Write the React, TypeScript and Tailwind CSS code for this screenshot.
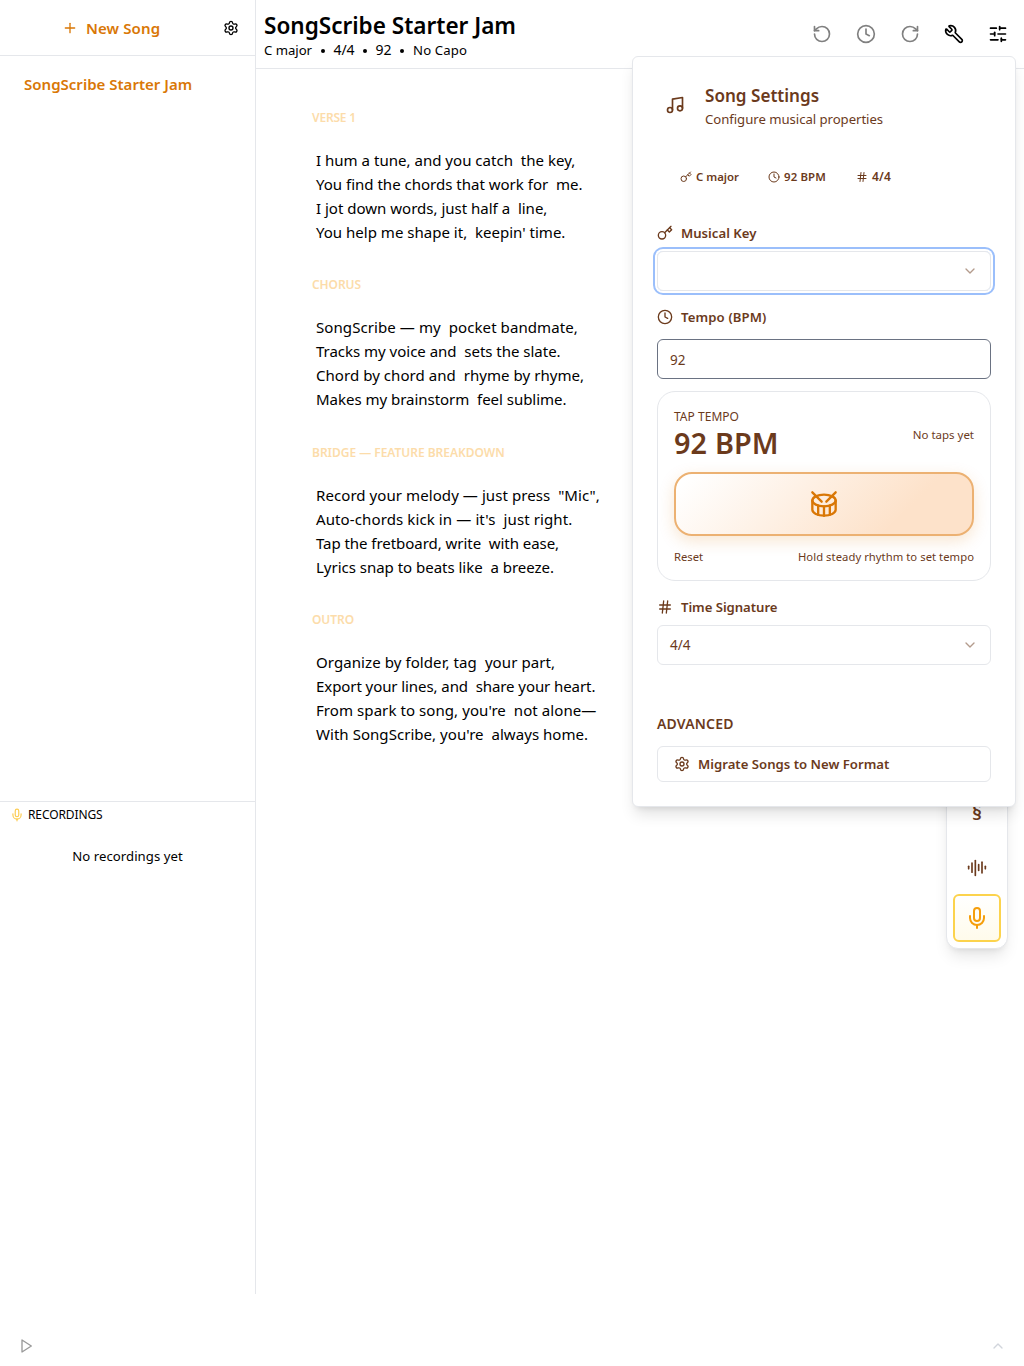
import React from "react";
import {
  AudioLines,
  ChevronDown,
  ChevronUp,
  Clock,
  Hash,
  Mic,
  Music,
  Plus,
  RotateCcw,
  RotateCw,
  Settings,
  SlidersHorizontal,
  Wrench,
} from "lucide-react";

type Line = [text: string, tracking: string];

const sections: { label: string; tracking: string; lines: Line[] }[] = [
  {
    label: "VERSE 1",
    tracking: "tracking-[-0.18px]",
    lines: [
      ["I hum a tune, and you catch  the key,", "tracking-[0.01px]"],
      ["You find the chords that work for  me.", "tracking-[-0.01px]"],
      ["I jot down words, just half a  line,", "tracking-[-0.01px]"],
      ["You help me shape it,  keepin' time.", "tracking-[0px]"],
    ],
  },
  {
    label: "CHORUS",
    tracking: "tracking-[-0.08px]",
    lines: [
      ["SongScribe — my  pocket bandmate,", "tracking-[0.07px]"],
      ["Tracks my voice and  sets the slate.", "tracking-[-0.03px]"],
      ["Chord by chord and  rhyme by rhyme,", "tracking-[0.04px]"],
      ["Makes my brainstorm  feel sublime.", "tracking-[-0.04px]"],
    ],
  },
  {
    label: "BRIDGE — FEATURE BREAKDOWN",
    tracking: "tracking-[-0.03px]",
    lines: [
      ['Record your melody — just press  "Mic",', "tracking-[0.06px]"],
      ["Auto-chords kick in — it's  just right.", "tracking-[0.1px]"],
      ["Tap the fretboard, write  with ease,", "tracking-[-0.06px]"],
      ["Lyrics snap to beats like  a breeze.", "tracking-[-0.03px]"],
    ],
  },
  {
    label: "OUTRO",
    tracking: "tracking-[-0.08px]",
    lines: [
      ["Organize by folder, tag  your part,", "tracking-[0.07px]"],
      ["Export your lines, and  share your heart.", "tracking-[-0.09px]"],
      ["From spark to song, you're  not alone—", "tracking-[0.06px]"],
      ["With SongScribe, you're  always home.", "tracking-[0.03px]"],
    ],
  },
];

function KeyIcon({ size }: { size: number }) {
  return (
    <svg
      width={size}
      height={size}
      viewBox="0 0 24 24"
      fill="none"
      stroke="currentColor"
      strokeWidth="2"
      strokeLinecap="round"
      strokeLinejoin="round"
    >
      <circle cx="7.5" cy="15.5" r="5.5" />
      <path d="m21 2-9.6 9.6" />
      <path d="m15.5 7.5 3 3L22 7l-3-3" />
    </svg>
  );
}

function DrumIcon() {
  return (
    <svg
      width="28"
      height="28"
      viewBox="0 0 24 24"
      fill="none"
      stroke="currentColor"
      strokeWidth="2"
      strokeLinecap="round"
      strokeLinejoin="round"
    >
      <path d="m2 2 8 8" />
      <path d="m22 2-8 8" />
      <ellipse cx="12" cy="9" rx="10" ry="5" />
      <path d="M7 13.4v7.9" />
      <path d="M12 14v8" />
      <path d="M17 13.4v7.9" />
      <path d="M2 9v8a10 5 0 0 0 20 0V9" />
    </svg>
  );
}

function Sidebar() {
  return (
    <aside className="flex h-[1294px] w-64 shrink-0 flex-col border-r border-gray-200">
      <div className="flex h-14 shrink-0 items-center border-b border-gray-200 pr-4 pl-[62px]">
        <button className="flex items-center gap-2 font-semibold text-[#d97706]">
          <Plus size={16} />
          <span className="text-[15.04px] leading-6 tracking-[0.1px]">New Song</span>
        </button>
        <Settings size={16} className="ml-auto" />
      </div>
      <div className="px-6 pt-4 text-[15.04px] leading-6 font-semibold text-[#d97706]">SongScribe Starter Jam</div>
      <div className="mt-auto h-[493px] border-t border-gray-200">
        <div className="flex h-[26px] items-center gap-1 pl-[10px]">
          <Mic size={14} className="text-[#fbbf24]/80" />
          <span className="text-[12px] leading-4 tracking-[-0.1px]">RECORDINGS</span>
        </div>
        <p className="mt-[18px] text-center text-[13.16px] leading-5 tracking-[0.05px]">No recordings yet</p>
      </div>
    </aside>
  );
}

function Dot() {
  return <span className="absolute top-[9px] right-[9px] h-1 w-1 rounded-full bg-black" />;
}

function Header() {
  return (
    <header className="flex h-[69px] items-start border-b border-gray-200 pl-2">
      <div className="pt-[10px]">
        <h1 className="text-[22.56px] leading-8 font-semibold tracking-[-0.01px]">SongScribe Starter Jam</h1>
        <div className="-mt-[2px] flex text-[13.16px] leading-5">
          <span className="relative w-[69.5px] tracking-[-0.03px]">
            C major
            <Dot />
          </span>
          <span className="relative w-[42px] text-[14px] tracking-[-0.07px]">
            4/4
            <Dot />
          </span>
          <span className="relative w-[37.5px] text-[14px]">
            92
            <Dot />
          </span>
          <span className="tracking-[0.13px]">No Capo</span>
        </div>
      </div>
      <div className="mt-6 mr-4 ml-auto flex gap-6">
        <RotateCcw size={20} className="text-[#808080]" />
        <Clock size={20} className="text-[#808080]" />
        <RotateCw size={20} className="text-[#808080]" />
        <Wrench size={20} className="-scale-x-100" />
        <SlidersHorizontal size={20} />
      </div>
    </header>
  );
}

function FieldLabel({ icon, children }: { icon: React.ReactNode; children: React.ReactNode }) {
  return (
    <div className="flex h-5 items-center gap-2 text-[13.16px] leading-5 font-semibold">
      {icon}
      {children}
    </div>
  );
}

function TapTempo() {
  return (
    <div className="mt-3 h-[190px] rounded-[18px] border border-gray-200 px-4 pt-4">
      <div className="flex h-14 items-start justify-between">
        <div>
          <div className="text-[12px] leading-[17px] tracking-[0.03px]">TAP TEMPO</div>
          <div className="text-[28.8px] leading-9 font-semibold tracking-[0.15px]">92 BPM</div>
        </div>
        <span className="pt-[19px] text-[11.5px] leading-4 tracking-[-0.02px]">No taps yet</span>
      </div>
      <button className="mt-2 flex h-16 w-full items-center justify-center rounded-[18px] border-2 border-[#ecb172] bg-[linear-gradient(135deg,#ffffff_4%,#fde2ca_75%)] text-[#d97706] shadow-[0_5px_16px_rgba(217,119,6,0.18)]">
        <DrumIcon />
      </button>
      <div className="mt-[13px] flex justify-between text-[11.28px] leading-4">
        <span>Reset</span>
        <span className="tracking-[0.04px]">Hold steady rhythm to set tempo</span>
      </div>
    </div>
  );
}

function SettingsPanel() {
  return (
    <section className="absolute top-14 right-2 z-10 h-[751px] w-96 rounded-md border border-gray-200 bg-white px-6 pt-[26px] text-[#6b3a1c] shadow-[0_10px_15px_-3px_rgba(0,0,0,0.12),0_4px_6px_-4px_rgba(0,0,0,0.12)]">
      <div className="flex h-12 items-center gap-5 pl-2">
        <Music size={20} className="mb-[5px]" />
        <div>
          <h2 className="text-[17.1px] leading-6 font-semibold">Song Settings</h2>
          <p className="text-[13.16px] leading-[22px] tracking-[-0.04px]">Configure musical properties</p>
        </div>
      </div>

      <div className="mt-[38px] flex h-4 items-center gap-[29px] pl-[23px] text-[11.4px] leading-4 font-semibold whitespace-nowrap">
        <span className="flex items-center gap-1">
          <KeyIcon size={12} />
          <span className="w-[43px]">C major</span>
        </span>
        <span className="flex items-center gap-1">
          <Clock size={12} />
          <span className="w-[43px] tracking-[0.15px]">92 BPM</span>
        </span>
        <span className="flex items-center gap-1">
          <Hash size={12} />
          <span className="text-[12px] tracking-[0.16px]">4/4</span>
        </span>
      </div>

      <div className="mt-[38px]">
        <FieldLabel icon={<KeyIcon size={16} />}>
          <span>Musical Key</span>
        </FieldLabel>
      </div>
      <div className="mt-2 flex h-10 items-center justify-end rounded-md border border-gray-200 px-3 ring-2 ring-[#9bbffb] ring-offset-2">
        <ChevronDown size={16} className="opacity-50" />
      </div>

      <div className="mt-4">
        <FieldLabel icon={<Clock size={16} />}>
          <span className="tracking-[0.12px]">Tempo (BPM)</span>
        </FieldLabel>
      </div>
      <div className="mt-3 flex h-10 items-center rounded-md border border-gray-500 px-3 pt-px text-[13.5px] leading-5">92</div>

      <TapTempo />

      <div className="mt-4">
        <FieldLabel icon={<Hash size={16} />}>
          <span className="tracking-[-0.05px]">Time Signature</span>
        </FieldLabel>
      </div>
      <div className="mt-2 flex h-10 items-center justify-between rounded-md border border-gray-200 px-3 text-[13.5px] leading-5">
        <span>4/4</span>
        <ChevronDown size={16} className="opacity-50" />
      </div>

      <div className="mt-[49px] text-[14px] leading-5 font-semibold tracking-[0.16px]">ADVANCED</div>
      <button className="mt-3 flex h-9 w-full items-center gap-2 rounded-md border border-gray-200 px-4 text-[13.16px] leading-5 font-semibold">
        <Settings size={16} />
        Migrate Songs to New Format
      </button>
    </section>
  );
}

function ToolDock() {
  return (
    <div className="absolute top-[738px] right-4 flex h-[211px] w-[62px] flex-col items-center justify-end gap-[2px] rounded-xl border border-gray-200 bg-white p-[6px] text-[#6b3a1c] shadow-[0_10px_15px_-3px_rgba(0,0,0,0.1),0_4px_6px_-4px_rgba(0,0,0,0.1)]">
      <div className="mb-[5px] flex h-12 w-12 items-center justify-center text-[20px] leading-6 font-semibold">§</div>
      <div className="flex h-12 w-12 items-center justify-center">
        <AudioLines size={20} />
      </div>
      <div className="flex h-12 w-12 shrink-0 items-center justify-center rounded-md border-2 border-[#fcd34d] bg-linear-to-b from-white to-[#fffbeb] text-[#f59e0b]">
        <Mic size={24} />
      </div>
    </div>
  );
}

export default function App() {
  return (
    <div className="relative flex h-[1366px] w-[1024px] flex-col overflow-hidden bg-white font-['Noto_Sans',sans-serif] text-black">
      <div className="flex">
        <Sidebar />
        <main className="min-w-0 flex-1">
          <Header />
          <div className="pt-[41px] pl-14">
            {sections.map((s) => (
              <div key={s.label} className="h-[167.4px]">
                <div className={`text-[12px] leading-4 font-semibold text-[#fcdcaa] ${s.tracking}`}>{s.label}</div>
                <div className="pt-[22px] pl-1">
                  {s.lines.map(([text, tracking]) => (
                    <p key={text} className={`text-[15.04px] leading-6 whitespace-pre ${tracking}`}>
                      {text}
                    </p>
                  ))}
                </div>
              </div>
            ))}
          </div>
        </main>
      </div>
      <footer className="flex flex-1 items-end justify-between pr-[18px] pb-3 pl-[18px]">
        <svg width="16" height="16" viewBox="0 0 24 24" fill="none" stroke="#999" strokeWidth="2" strokeLinejoin="round">
          <path d="M6 3 20 12 6 21Z" />
        </svg>
        <ChevronUp size={16} className="text-gray-300" />
      </footer>
      <ToolDock />
      <SettingsPanel />
    </div>
  );
}
